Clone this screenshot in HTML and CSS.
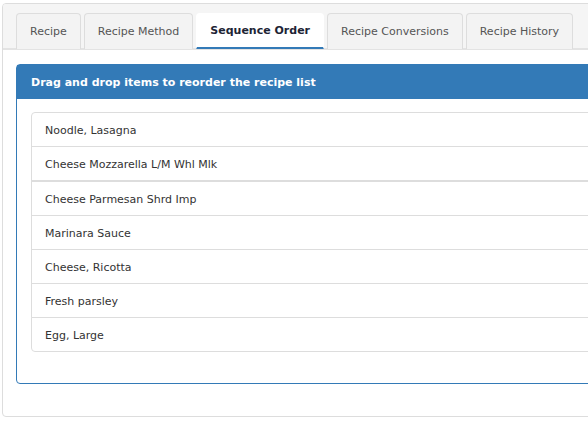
FILE: index.html
```html
<!DOCTYPE html>
<html lang="en">
<head>
<meta charset="UTF-8" />
<meta name="viewport" content="width=device-width, initial-scale=1" />
<title>Recipe - Sequence Order</title>
<link rel="stylesheet" href="styles.css">
</head>
<body>
  <div class="tab-card">
    <ul class="tabs">
      <li class="tab">Recipe</li>
      <li class="tab">Recipe Method</li>
      <li class="tab active">Sequence Order</li>
      <li class="tab">Recipe Conversions</li>
      <li class="tab">Recipe History</li>
    </ul>

    <div class="tab-content">
      <div class="panel">
        <div class="panel-heading">Drag and drop items to reorder the recipe list</div>
        <div class="panel-body">
          <ul class="sort-list">
            <li class="sort-item">Noodle, Lasagna</li>
            <li class="sort-item">Cheese Mozzarella L/M Whl Mlk</li>
            <li class="sort-item moved">Cheese Parmesan Shrd Imp</li>
            <li class="sort-item">Marinara Sauce</li>
            <li class="sort-item">Cheese, Ricotta</li>
            <li class="sort-item">Fresh parsley</li>
            <li class="sort-item">Egg, Large</li>
          </ul>
        </div>
      </div>
    </div>
  </div>
</body>
</html>
```

FILE: styles.css
```css
body {
  margin: 0;
  background: #fff;
  font-family: "DejaVu Sans", Verdana, sans-serif;
  font-size: 11px;
  color: #333;
  overflow: hidden;
}
.tab-card {
  margin: 3px 0 0 2px;
  width: 620px;
  height: 412px;
  border: 1px solid #ddd;
  border-radius: 4px;
  background: #fff;
  overflow: hidden;
}
.tabs {
  list-style: none;
  margin: 0;
  padding: 9px 0 0 13px;
  display: flex;
  gap: 3px;
  background: #f5f5f5;
  border-bottom: 2px solid #e3e3e3;
}
.tab {
  height: 36px;
  line-height: 35px;
  padding: 0 13px;
  margin-bottom: -1px;
  color: #555;
  background: #f3f3f3;
  border: 1px solid #ddd;
  border-bottom: none;
  border-radius: 4px 4px 0 0;
  box-sizing: border-box;
}
.tab.active {
  background: #fff;
  color: #1d2435;
  font-weight: bold;
  border-color: #fff;
  border-bottom: 2px solid #337ab7;
  line-height: 33px;
}
.tab-content {
  padding: 14px 0 0 13px;
}
.panel {
  border: 1px solid #337ab7;
  border-radius: 4px;
  height: 320px;
  box-sizing: border-box;
}
.panel-heading {
  background: #337ab7;
  color: #fff;
  font-weight: bold;
  height: 34px;
  line-height: 34px;
  padding: 1px 14px 0;
  box-sizing: border-box;
}
.panel-body {
  padding: 13px 0 0 14px;
}
.sort-list {
  list-style: none;
  margin: 0;
  padding: 0;
}
.sort-item {
  line-height: 13px;
  padding: 11px 13px 9px;
  border: 1px solid #ddd;
  margin-bottom: -1px;
  background: #fff;
}
.sort-item:first-child {
  border-radius: 4px 0 0 0;
}
.sort-item:last-child {
  border-radius: 0 0 0 4px;
}
.sort-item.moved {
  border-top: 2px solid #ddd;
}
```
